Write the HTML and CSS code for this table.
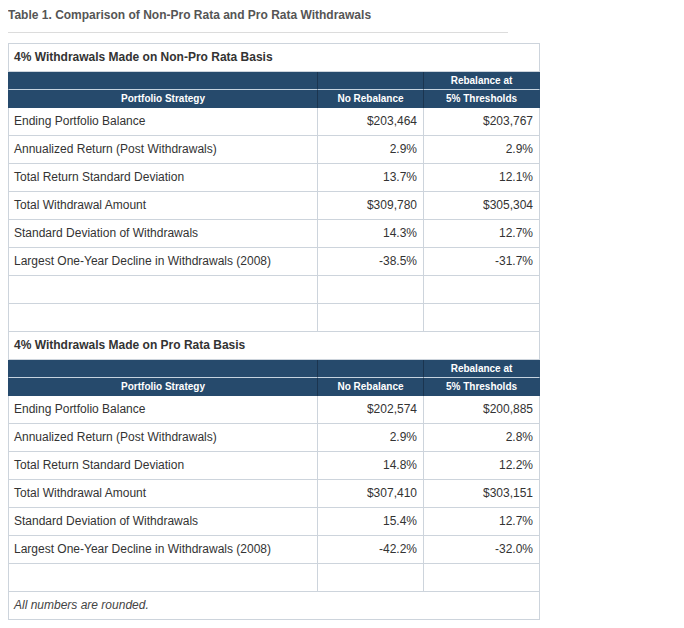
FILE: index.html
```html
<!DOCTYPE html>
<html>
<head>
<meta charset="utf-8">
<link rel="stylesheet" href="styles.css">
</head>
<body>
<div class="title">Table 1. Comparison of Non-Pro Rata and Pro Rata Withdrawals</div>
<div class="rule"></div>
<table class="tbl">
  <colgroup><col class="w1"><col class="w2"><col class="w3"></colgroup>
  <tr><td class="caption first" colspan="3">4% Withdrawals Made on Non-Pro Rata Basis</td></tr>
  <tr class="h1"><th class="c1"></th><th class="c2"></th><th class="c3">Rebalance at</th></tr>
  <tr class="h2"><th class="c1">Portfolio Strategy</th><th class="c2">No Rebalance</th><th class="c3">5% Thresholds</th></tr>
  <tr><td class="c1">Ending Portfolio Balance</td><td class="num">$203,464</td><td class="num">$203,767</td></tr>
  <tr><td class="c1">Annualized Return (Post Withdrawals)</td><td class="num">2.9%</td><td class="num">2.9%</td></tr>
  <tr><td class="c1">Total Return Standard Deviation</td><td class="num">13.7%</td><td class="num">12.1%</td></tr>
  <tr><td class="c1">Total Withdrawal Amount</td><td class="num">$309,780</td><td class="num">$305,304</td></tr>
  <tr><td class="c1">Standard Deviation of Withdrawals</td><td class="num">14.3%</td><td class="num">12.7%</td></tr>
  <tr><td class="c1">Largest One-Year Decline in Withdrawals (2008)</td><td class="num">-38.5%</td><td class="num">-31.7%</td></tr>
  <tr><td class="c1">&nbsp;</td><td class="num">&nbsp;</td><td class="num">&nbsp;</td></tr>
  <tr><td class="c1">&nbsp;</td><td class="num">&nbsp;</td><td class="num">&nbsp;</td></tr>
  <tr><td class="caption" colspan="3">4% Withdrawals Made on Pro Rata Basis</td></tr>
  <tr class="h1"><th class="c1"></th><th class="c2"></th><th class="c3">Rebalance at</th></tr>
  <tr class="h2"><th class="c1">Portfolio Strategy</th><th class="c2">No Rebalance</th><th class="c3">5% Thresholds</th></tr>
  <tr><td class="c1">Ending Portfolio Balance</td><td class="num">$202,574</td><td class="num">$200,885</td></tr>
  <tr><td class="c1">Annualized Return (Post Withdrawals)</td><td class="num">2.9%</td><td class="num">2.8%</td></tr>
  <tr><td class="c1">Total Return Standard Deviation</td><td class="num">14.8%</td><td class="num">12.2%</td></tr>
  <tr><td class="c1">Total Withdrawal Amount</td><td class="num">$307,410</td><td class="num">$303,151</td></tr>
  <tr><td class="c1">Standard Deviation of Withdrawals</td><td class="num">15.4%</td><td class="num">12.7%</td></tr>
  <tr><td class="c1">Largest One-Year Decline in Withdrawals (2008)</td><td class="num">-42.2%</td><td class="num">-32.0%</td></tr>
  <tr><td class="c1">&nbsp;</td><td class="num">&nbsp;</td><td class="num">&nbsp;</td></tr>
  <tr><td class="note" colspan="3">All numbers are rounded.</td></tr>
</table>
</body>
</html>
```
FILE: styles.css
```css
body {
  margin: 8px;
  font-family: "Liberation Sans", Arial, sans-serif;
  color: #333;
  background: #fff;
}
.title {
  font-size: 12px;
  font-weight: bold;
  line-height: 14px;
  color: #555;
}
.rule {
  width: 500px;
  height: 1px;
  background: #dcdcdc;
  margin-top: 10px;
}
.tbl {
  margin-top: 10px;
  border-collapse: separate;
  border-spacing: 0;
  width: 532px;
  table-layout: fixed;
  font-size: 12px;
}
.w1 { width: 310px; }
.w2 { width: 106px; }
.w3 { width: 116px; }
.tbl td {
  padding: 0 6px 0 5px;
  line-height: 27px;
  border-right: 1px solid #cdd4dc;
  border-bottom: 1px solid #cdd4dc;
  white-space: nowrap;
}
.tbl td.c1, .tbl td.caption, .tbl td.note {
  border-left: 1px solid #cdd4dc;
}
.tbl td.first {
  border-top: 1px solid #cdd4dc;
}
.tbl td.num { text-align: right; }
.tbl td.caption { font-weight: bold; color: #333; }
.tbl td.note { font-style: italic; color: #444; }
.tbl th {
  background: #264a6c;
  color: #fff;
  font-size: 10px;
  font-weight: bold;
  text-align: center;
  padding: 0;
  border-right: 1px solid #1b3550;
}
.tbl th.c1 { border-left: 1px solid #264a6c; }
.tbl th.c3 { border-right-color: #264a6c; }
.tbl tr.h1 th {
  line-height: 17px;
  border-bottom: 1px solid #c6d3df;
}
.tbl tr.h2 th {
  line-height: 18px;
}
```
